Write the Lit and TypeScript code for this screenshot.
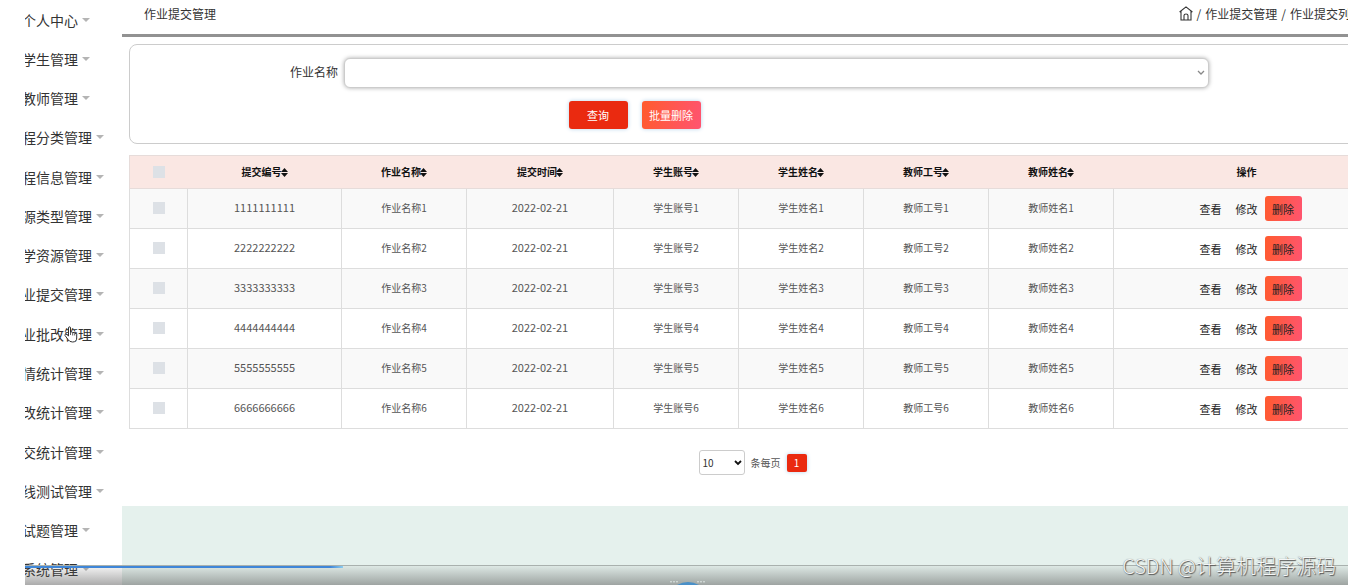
import { LitElement, html, css, svg } from "lit";
import { customElement, state } from "lit/decorators.js";

const MENU = [
  "个人中心", "学生管理", "教师管理", "程分类管理", "程信息管理",
  "源类型管理", "学资源管理", "业提交管理", "业批改管理", "情统计管理",
  "改统计管理", "交统计管理", "线测试管理", "试题管理", "系统管理",
];

const COLUMNS = ["提交编号", "作业名称", "提交时间", "学生账号", "学生姓名", "教师工号", "教师姓名"];

const ROWS = [1, 2, 3, 4, 5, 6].map((n) => ({
  n,
  id: String(n).repeat(10),
  date: "2022-02-21",
}));

const sortIcon = svg`<svg class="sort" viewBox="0 0 7 9" aria-hidden="true"><path d="M3.500 0 7 4H0zM3.500 9 0 5h7z" fill="currentColor"/></svg>`;

@customElement("side-menu")
export class SideMenu extends LitElement {
  static styles = css`
    :host {
      display: block;
      overflow: hidden;
    }
    .list {
      display: grid;
      grid-auto-rows: 1fr;
      height: calc(100vh + 4px);
      margin: 0 0 0 -3px;
      padding: 0;
      list-style: none;
    }
    .link {
      display: flex;
      align-items: center;
      gap: 4px;
      height: 100%;
      color: #333;
      font-size: 14px;
      line-height: 20px;
      white-space: nowrap;
      text-decoration: none;
    }
    .caret {
      border: 4px solid transparent;
      border-top-color: #b4b4b4;
      border-bottom-width: 0;
    }
  `;

  render() {
    return html`<ul class="list">
      ${MENU.map((m) => html`<li><a class="link" href="#">${m}<span class="caret"></span></a></li>`)}
    </ul>`;
  }
}

@customElement("search-panel")
export class SearchPanel extends LitElement {
  static styles = css`
    :host {
      display: block;
      box-sizing: border-box;
      height: 100px;
      padding: 13px 168px 0 160px;
      border: 1px solid #ccc;
      border-radius: 8px;
    }
    .field {
      display: flex;
      align-items: center;
      gap: 6px;
      color: #333;
      font-size: 12px;
      line-height: 18px;
    }
    .label {
      padding-bottom: 2px;
    }
    .control {
      position: relative;
      flex: 1;
      display: flex;
    }
    .select {
      flex: 1;
      height: 30px;
      appearance: none;
      border: 1px solid #ccc;
      border-radius: 6px;
      background: #fff;
      box-shadow: 0 0 4px #aaa;
    }
    .chevron {
      position: absolute;
      right: 4px;
      top: 12px;
      width: 8px;
      height: 6px;
      pointer-events: none;
    }
    .actions {
      display: flex;
      justify-content: center;
      gap: 14px;
      margin: 13px 230px 0 0;
    }
    .button {
      width: 59px;
      height: 28px;
      padding: 0;
      border: 0;
      border-radius: 3px;
      color: #fff;
      font: 11px "Noto Sans CJK SC", sans-serif;
      background: #ea2a10;
      box-shadow: 0 0 4px #b5d3ea;
    }
    .danger {
      background: linear-gradient(100deg, #ff5b2e, #ff5470);
    }
  `;

  render() {
    return html`
      <div class="field">
        <label class="label" for="name">作业名称</label>
        <div class="control">
          <select class="select" id="name"><option></option></select>
          <svg class="chevron" viewBox="0 0 8 6"><path d="M1 1l3 3 3-3" fill="none" stroke="#888" stroke-width="1.3"/></svg>
        </div>
      </div>
      <div class="actions">
        <button class="button">查询</button>
        <button class="button danger">批量删除</button>
      </div>
    `;
  }
}

@customElement("submission-table")
export class SubmissionTable extends LitElement {
  static styles = css`
    :host {
      display: block;
    }
    .table {
      width: 100%;
      table-layout: fixed;
      border-collapse: collapse;
      color: #555;
      font-size: 10px;
      line-height: 16px;
      text-align: center;
    }
    .w-check { width: 58px; }
    .w-id { width: 154px; }
    .w-date { width: 147px; }
    .w-text { width: 125px; }
    .w-ops { width: 266px; }
    .head {
      height: 33px;
      background: #fae7e3;
      color: #111;
    }
    .head th {
      padding: 0;
      border: 1px solid #e6dcda;
      border-width: 1px 0;
    }
    .head th:first-child {
      border-left-width: 1px;
    }
    .row {
      height: 40px;
    }
    .row:nth-child(odd) {
      background: #f9f9f9;
    }
    .row td {
      padding: 0 0 2px;
      border: 1px solid #ddd;
    }
    .row .num {
      padding-bottom: 3px;
      font-size: 11px;
    }
    .sort {
      width: 7px;
      height: 9px;
      margin-left: -1px;
      vertical-align: -1px;
    }
    .check {
      display: block;
      appearance: none;
      width: 12px;
      height: 12px;
      margin: 0 auto;
      background: #dde1e6;
    }
    .ops {
      display: flex;
      align-items: center;
      justify-content: center;
      gap: 7px;
      padding: 2px 0 0 8px;
    }
    .op {
      height: 25px;
      padding: 0;
      border: 0;
      background: none;
      color: #222;
      font: 11px "Noto Sans CJK SC", sans-serif;
    }
    .edit {
      padding-left: 7px;
    }
    .del {
      width: 37px;
      border-radius: 3px;
      background: linear-gradient(100deg, #ff5b2e, #ff5470);
    }
  `;

  render() {
    return html`<table class="table">
      <colgroup>
        <col class="w-check" /><col class="w-id" /><col class="w-text" /><col class="w-date" />
        <col class="w-text" /><col class="w-text" /><col class="w-text" /><col class="w-text" />
        <col class="w-ops" />
      </colgroup>
      <thead>
        <tr class="head">
          <th><input class="check" type="checkbox" aria-label="全选" /></th>
          ${COLUMNS.map((c) => html`<th>${c}${sortIcon}</th>`)}
          <th>操作</th>
        </tr>
      </thead>
      <tbody>
        ${ROWS.map((r) => html`<tr class="row">
          <td><input class="check" type="checkbox" aria-label=${r.id} /></td>
          <td class="num">${r.id}</td>
          <td>作业名称${r.n}</td>
          <td class="num">${r.date}</td>
          <td>学生账号${r.n}</td>
          <td>学生姓名${r.n}</td>
          <td>教师工号${r.n}</td>
          <td>教师姓名${r.n}</td>
          <td>
            <div class="ops">
              <button class="op">查看</button>
              <button class="op edit">修改</button>
              <button class="op del">删除</button>
            </div>
          </td>
        </tr>`)}
      </tbody>
    </table>`;
  }
}

@customElement("page-size")
export class PageSize extends LitElement {
  @state() private page = 1;

  static styles = css`
    :host {
      display: flex;
      align-items: center;
      justify-content: center;
      gap: 6px;
      color: #555;
      font-size: 10px;
    }
    .box {
      position: relative;
      display: flex;
    }
    .select {
      width: 46px;
      height: 25px;
      padding: 0 3px;
      appearance: none;
      border: 1px solid #ccc;
      border-radius: 3px;
      background: #fff;
      color: #333;
      font: 10px "Noto Sans CJK SC", sans-serif;
    }
    .chevron {
      position: absolute;
      right: 3px;
      top: 10px;
      width: 8px;
      height: 6px;
      pointer-events: none;
    }
    .page {
      width: 20px;
      height: 18px;
      padding: 0;
      border: 0;
      border-radius: 2px;
      background: #ea2a10;
      box-shadow: 0 0 4px #b5d3ea;
      color: #fff;
      font: 10px "Noto Sans CJK SC", sans-serif;
    }
  `;

  render() {
    return html`
      <div class="box">
        <select class="select" id="size"><option>10</option></select>
        <svg class="chevron" viewBox="0 0 8 6"><path d="M1 1l3 3 3-3" fill="none" stroke="#111" stroke-width="1.8"/></svg>
      </div>
      <label for="size">条每页</label>
      <button class="page">${this.page}</button>
    `;
  }
}

@customElement("app-root")
export class AppRoot extends LitElement {
  static styles = css`
    :host {
      position: relative;
      display: grid;
      grid-template-columns: 97px minmax(0, 1fr);
      height: 100vh;
      margin: 0 2px 0 25px;
      overflow: hidden;
      background: #fff;
      font-family: "Noto Sans CJK SC", sans-serif;
    }
    .main {
      display: flex;
      flex-direction: column;
      width: calc(100% + 38px);
      height: 100vh;
    }
    .header {
      display: flex;
      align-items: center;
      justify-content: space-between;
      box-sizing: border-box;
      height: 37px;
      padding: 0 24px 7px 22px;
      border-bottom: 3px solid #929292;
      color: #333;
      font-size: 12px;
      line-height: 18px;
    }
    .crumbs {
      display: flex;
      align-items: center;
      gap: 4px;
    }
    .crumb {
      color: inherit;
      text-decoration: none;
    }
    .home {
      display: block;
      width: 14px;
      height: 15px;
    }
    .content {
      flex: 1;
      display: flex;
      flex-direction: column;
      padding: 7px 8px 0 7px;
    }
    .table {
      margin-top: 11px;
    }
    .pager {
      margin: 21px 2px 0 0;
    }
    .footer {
      height: 79px;
      background: #e5f1ed;
    }
    .cursor {
      position: absolute;
      left: 39px;
      top: 326px;
      width: 14px;
      height: 17px;
    }
    .player {
      position: absolute;
      left: 0;
      right: 0;
      bottom: 0;
      height: 20px;
      overflow: hidden;
      background: linear-gradient(rgba(90, 90, 90, 0.06), rgba(80, 80, 80, 0.48));
      border-top: 1px solid #a9b1ae;
      box-sizing: border-box;
    }
    .progress {
      height: 2px;
      width: 24%;
      background: linear-gradient(90deg, #3f86d8 96%, #8ccdf0);
    }
    .knob {
      position: absolute;
      left: 643px;
      bottom: 0;
      width: 40px;
      height: 4px;
    }
    .mark {
      position: absolute;
      right: 12px;
      bottom: 4px;
      color: #f4f6f5;
      font-size: 20px;
      font-weight: 300;
      line-height: 30px;
      text-shadow: 1px 1px 1px #555, 0 0 1px #777;
      white-space: nowrap;
    }
  `;

  render() {
    return html`
      <side-menu></side-menu>
      <main class="main">
        <header class="header">
          <span>作业提交管理</span>
          <nav class="crumbs">
            <a class="crumb" href="#" aria-label="首页">
              <svg class="home" viewBox="0 0 14 15" fill="none" stroke="#333" stroke-width="1.1">
                <path d="M.6 6 7 .9 13.4 6M2 5v9h10V5M5 14V9.500q0-1.500 2-1.500t2 1.500V14" />
              </svg>
            </a>
            <span>/</span><a class="crumb" href="#">作业提交管理</a>
            <span>/</span><a class="crumb" href="#">作业提交列表</a>
          </nav>
        </header>
        <div class="content">
          <search-panel></search-panel>
          <submission-table class="table"></submission-table>
          <page-size class="pager"></page-size>
        </div>
        <footer class="footer"></footer>
      </main>
      <svg class="cursor" viewBox="0 0 14 17">
        <path d="M4.500 10V2q0-1.200 1-1.200t1 1.200v4q2-.6 2.200.6 1.800-.5 2 .7 2-.2 2 1.200v3.500q0 4-4.200 4-3 0-4.500-2.500L1 9.500q-.4-1.400.8-1.400Q3 8.300 4.500 10z" fill="#fff" stroke="#333" stroke-width="1" />
        <path d="M6.500 6v3M8.700 6.800V9.500M10.700 7.500V9.500" stroke="#333" stroke-width=".8" />
      </svg>
      <div class="player">
        <div class="progress"></div>
        <svg class="knob" viewBox="0 0 40 4">
          <path d="M2 .8h9M29 .8h9" stroke="#dfe6e3" stroke-dasharray="2 1" />
          <path d="M9 4q11-6 22 0z" fill="#4a90c8" />
        </svg>
      </div>
      <div class="mark">CSDN @计算机程序源码</div>
    `;
  }
}
